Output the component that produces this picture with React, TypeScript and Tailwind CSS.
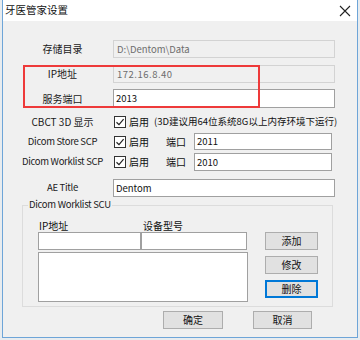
import React from "react";

const FONT = { fontFamily: '"Noto Sans CJK SC", "Noto Sans", sans-serif' };

function Check() {
  return (
    <span className="w-[12px] h-[12px] border border-[#333] bg-white flex items-center justify-center shrink-0">
      <svg width="10" height="10" viewBox="0 0 10 10">
        <path d="M1.5 5.2 L4 7.6 L8.6 2.2" fill="none" stroke="#222" strokeWidth="1.2" />
      </svg>
    </span>
  );
}

function Label({ children, latin }: { children: React.ReactNode; latin?: boolean }) {
  return (
    <div
      className={
        "w-[85px] shrink-0 text-center leading-none text-[#1a1a1a] whitespace-nowrap " +
        (latin ? "text-[9.5px] tracking-[-0.3px]" : "text-[10px]")
      }
    >
      {children}
    </div>
  );
}

function Btn({ children, w, focus }: { children: React.ReactNode; w: string; focus?: boolean }) {
  return (
    <div
      className={
        "h-[18px] flex items-center justify-center text-[10px] leading-none text-[#111] bg-[#e1e1e1] " +
        w +
        (focus ? " border-2 border-[#0078d7]" : " border border-[#adadad]")
      }
    >
      {children}
    </div>
  );
}

export default function App() {
  return (
    <div className="w-[360px] h-[340px] bg-[#e8ecef] overflow-hidden" style={FONT}>
      <div className="ml-[2px] w-[356px] h-[338px] flex flex-col border-l border-r border-b border-[#6ea5d8] bg-[#f0f0f0] relative">
        {/* title bar */}
        <div className="h-[21px] bg-white flex items-center justify-between pl-[2px] pr-[6px] shrink-0">
          <span className="text-[10.5px] leading-none text-[#111]">牙医管家设置</span>
          <svg width="12" height="12" viewBox="0 0 12 12">
            <path d="M1 1 L11 11 M11 1 L1 11" stroke="#222" strokeWidth="1.1" />
          </svg>
        </div>

        {/* client */}
        <div className="flex flex-col pl-[17px]">
          <div className="flex items-center mt-[19px] h-[18px]">
            <Label>存储目录</Label>
            <div className="ml-[8px] w-[222px] h-[18px] border border-[#d3d3d3] bg-[#f0f0f0] flex items-center px-[3px] text-[9.5px] text-[#6d6d6d]">
              D:\Dentom\Data
            </div>
          </div>
          <div className="flex items-center mt-[7px] h-[18px]">
            <Label>IP地址</Label>
            <div className="ml-[8px] w-[222px] h-[18px] border border-[#d3d3d3] bg-[#f0f0f0] flex items-center px-[3px] text-[9.5px] text-[#6d6d6d] tracking-[0.5px]">
              172.16.8.40
            </div>
          </div>
          <div className="flex items-center mt-[6px] h-[19px]">
            <Label>服务端口</Label>
            <div className="ml-[8px] w-[222px] h-[19px] border border-[#a0a0a0] bg-white flex items-center px-[2px] text-[9.5px] text-[#111]">
              2013
            </div>
          </div>
          <div className="flex items-center mt-[5px] h-[18px]">
            <Label>CBCT 3D 显示</Label>
            <div className="ml-[9px] flex items-center">
              <Check />
              <span className="ml-[3px] text-[10px] leading-none text-[#111]">启用</span>
              <span className="ml-[5px] text-[9.5px] leading-none text-[#111] whitespace-nowrap">
                (3D建议用64位系统8G以上内存环境下运行)
              </span>
            </div>
          </div>
          <div className="flex items-center mt-[2px] h-[17px]">
            <Label latin>Dicom Store SCP</Label>
            <div className="ml-[9px] flex items-center">
              <Check />
              <span className="ml-[3px] text-[10px] leading-none text-[#111]">启用</span>
            </div>
            <span className="ml-[17px] text-[10px] leading-none text-[#111]">端口</span>
            <div className="ml-[8px] w-[138px] h-[17px] border border-[#a0a0a0] bg-white flex items-center px-[2px] text-[9.5px] text-[#111]">
              2011
            </div>
          </div>
          <div className="flex items-center mt-[3px] h-[18px]">
            <Label latin>Dicom Worklist SCP</Label>
            <div className="ml-[9px] flex items-center">
              <Check />
              <span className="ml-[3px] text-[10px] leading-none text-[#111]">启用</span>
            </div>
            <span className="ml-[17px] text-[10px] leading-none text-[#111]">端口</span>
            <div className="ml-[8px] w-[138px] h-[18px] border border-[#a0a0a0] bg-white flex items-center px-[2px] text-[9.5px] text-[#111]">
              2010
            </div>
          </div>
          <div className="flex items-center mt-[8px] h-[18px]">
            <Label latin>AE Title</Label>
            <div className="ml-[8px] w-[222px] h-[18px] border border-[#a0a0a0] bg-white flex items-center px-[2px] text-[9.5px] text-[#111]">
              Dentom
            </div>
          </div>
        </div>

        {/* group box */}
        <div className="relative ml-[19px] mt-[8px] w-[311px] h-[102px] border border-[#dcdcdc]">
          <span className="absolute left-[5px] top-[-6px] bg-[#f0f0f0] px-[1px] text-[9.5px] tracking-[-0.3px] leading-none text-[#1a1a1a]">
            Dicom Worklist SCU
          </span>
          <div className="flex pl-[15px] pt-[15px]">
            <div className="flex flex-col">
              <div className="flex text-[10px] leading-none text-[#111] h-[11px]">
                <span className="w-[103px] pl-[1px]">IP地址</span>
                <span className="pl-[2px]">设备型号</span>
              </div>
              <div className="flex">
                <div className="w-[103px] h-[18px] border border-[#a0a0a0] bg-white" />
                <div className="w-[106px] h-[18px] border border-[#a0a0a0] bg-white" />
              </div>
              <div className="mt-[2px] w-[210px] h-[50px] border border-[#a0a0a0] bg-white" />
            </div>
            <div className="ml-[17px] flex flex-col gap-[6px] pt-[11px]">
              <Btn w="w-[53px]">添加</Btn>
              <Btn w="w-[53px]">修改</Btn>
              <Btn w="w-[53px]" focus>删除</Btn>
            </div>
          </div>
        </div>

        {/* bottom buttons */}
        <div className="flex ml-[160px] mt-[4px] gap-[30px]">
          <Btn w="w-[60px]">确定</Btn>
          <Btn w="w-[59px]">取消</Btn>
        </div>

        {/* red annotation */}
        <div className="absolute left-[20px] top-[65px] w-[237px] h-[43px] border-2 border-[#ee3a3a] pointer-events-none" />
      </div>
    </div>
  );
}
